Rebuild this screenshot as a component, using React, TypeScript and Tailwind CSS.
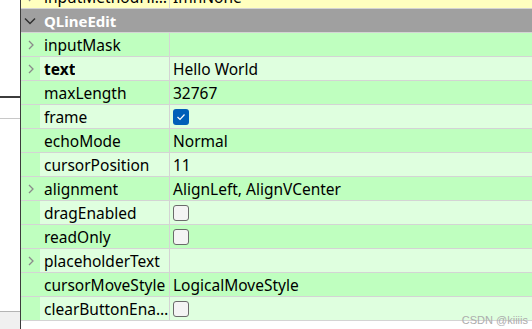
import React from 'react';

type Prop = {
  name: string;
  value?: string;
  check?: boolean;
  expand?: boolean;
  bold?: boolean;
};

const props: Prop[] = [
  { name: 'inputMask', expand: true },
  { name: 'text', value: 'Hello World', expand: true, bold: true },
  { name: 'maxLength', value: '32767' },
  { name: 'frame', check: true },
  { name: 'echoMode', value: 'Normal' },
  { name: 'cursorPosition', value: '11' },
  { name: 'alignment', value: 'AlignLeft, AlignVCenter', expand: true },
  { name: 'dragEnabled', check: false },
  { name: 'readOnly', check: false },
  { name: 'placeholderText', expand: true },
  { name: 'cursorMoveStyle', value: 'LogicalMoveStyle' },
  { name: 'clearButtonEnabled', check: false },
];

function ChevronRight() {
  return (
    <svg width="8" height="10" viewBox="0 0 8 10" className="ml-[6px]">
      <path d="M2 1 L6 5 L2 9" fill="none" stroke="#8a8a8a" strokeWidth="1.3" />
    </svg>
  );
}

function ChevronDown() {
  return (
    <svg width="12" height="8" viewBox="0 0 12 8" className="ml-[3px]">
      <path d="M1 1.5 L6 6.5 L11 1.5" fill="none" stroke="#303030" strokeWidth="1.5" />
    </svg>
  );
}

function Check({ on }: { on: boolean }) {
  if (on) {
    return (
      <div className="w-[16px] h-[16px] rounded-[3px] bg-[#005fb8] flex items-center justify-center">
        <svg width="10" height="8" viewBox="0 0 10 8">
          <path d="M1.5 4 L4 6.5 L8.5 1.5" fill="none" stroke="#ffffff" strokeWidth="1.2" />
        </svg>
      </div>
    );
  }
  return <div className="w-[16px] h-[16px] rounded-[3px] bg-[#f4f4f4] border border-[#6a6a6a]" />;
}

function Row({ p, i }: { p: Prop; i: number }) {
  const bg = i % 2 === 0 ? 'bg-[#bfffbf]' : 'bg-[#dfffdf]';
  return (
    <div className="flex h-[24px] border-b border-[#d4d4d4] bg-[#bfffbf]">
      <div className="w-[19px] flex items-center">{p.expand && <ChevronRight />}</div>
      <div className={`w-[130px] flex items-center pl-[4px] pt-[2px] border-r border-[#d4d4d4] ${bg}`}>
        <span className={`truncate ${p.bold ? 'font-bold' : ''}`}>{p.name}</span>
      </div>
      <div className={`flex-1 flex items-center pl-[3px] ${bg}`}>
        {p.check !== undefined ? <Check on={p.check} /> : <span className="pt-[2px]">{p.value}</span>}
      </div>
    </div>
  );
}

export default function App() {
  return (
    <div
      className="relative w-[532px] h-[329px] overflow-hidden bg-white flex text-[15.5px] text-[#000] leading-[21px]"
      style={{ fontFamily: '"Noto Sans", "Open Sans", sans-serif' }}
    >
      {/* left neighbour widget */}
      <div className="w-[20px] flex flex-col">
        <div className="h-[96px]" />
        <div className="h-[2px] bg-[#3c3c3c]" />
        <div className="h-[20px]" />
        <div className="h-px bg-[#c8c8c8]" />
        <div className="flex-1" />
        <div className="h-[18px] bg-[#f0f0f0] border-t border-[#b4b4b4]" />
      </div>
      <div className="w-px bg-[#3c3c3c]" />

      {/* property editor */}
      <div className="flex-1 flex flex-col -mt-[15px]">
        <div className="flex h-[24px] border-b border-[#d4d4d4] bg-[#ffffbf]">
          <div className="w-[19px] flex items-center">
            <ChevronRight />
          </div>
          <div className="w-[130px] flex items-center pl-[4px] pt-[2px] border-r border-[#d4d4d4]">
            <span className="truncate">inputMethodHints</span>
          </div>
          <div className="flex-1 flex items-center pl-[3px] pt-[2px]">ImhNone</div>
        </div>
        <div className="flex items-center h-[24px] border-b border-[#d4d4d4] bg-[#a0a0a0]">
          <div className="w-[19px] flex items-center">
            <ChevronDown />
          </div>
          <span className="pl-[4px] pt-[2px] font-bold text-white text-[15px]">QLineEdit</span>
        </div>
        {props.map((p, i) => (
          <Row key={p.name} p={p} i={i} />
        ))}
      </div>

      <span
        className="absolute right-[4px] bottom-[3px] text-[11px] leading-[12px] text-[#adadad]"
        style={{ fontFamily: '"Liberation Sans", Arial, sans-serif' }}
      >
        CSDN @kiiiis
      </span>
    </div>
  );
}
